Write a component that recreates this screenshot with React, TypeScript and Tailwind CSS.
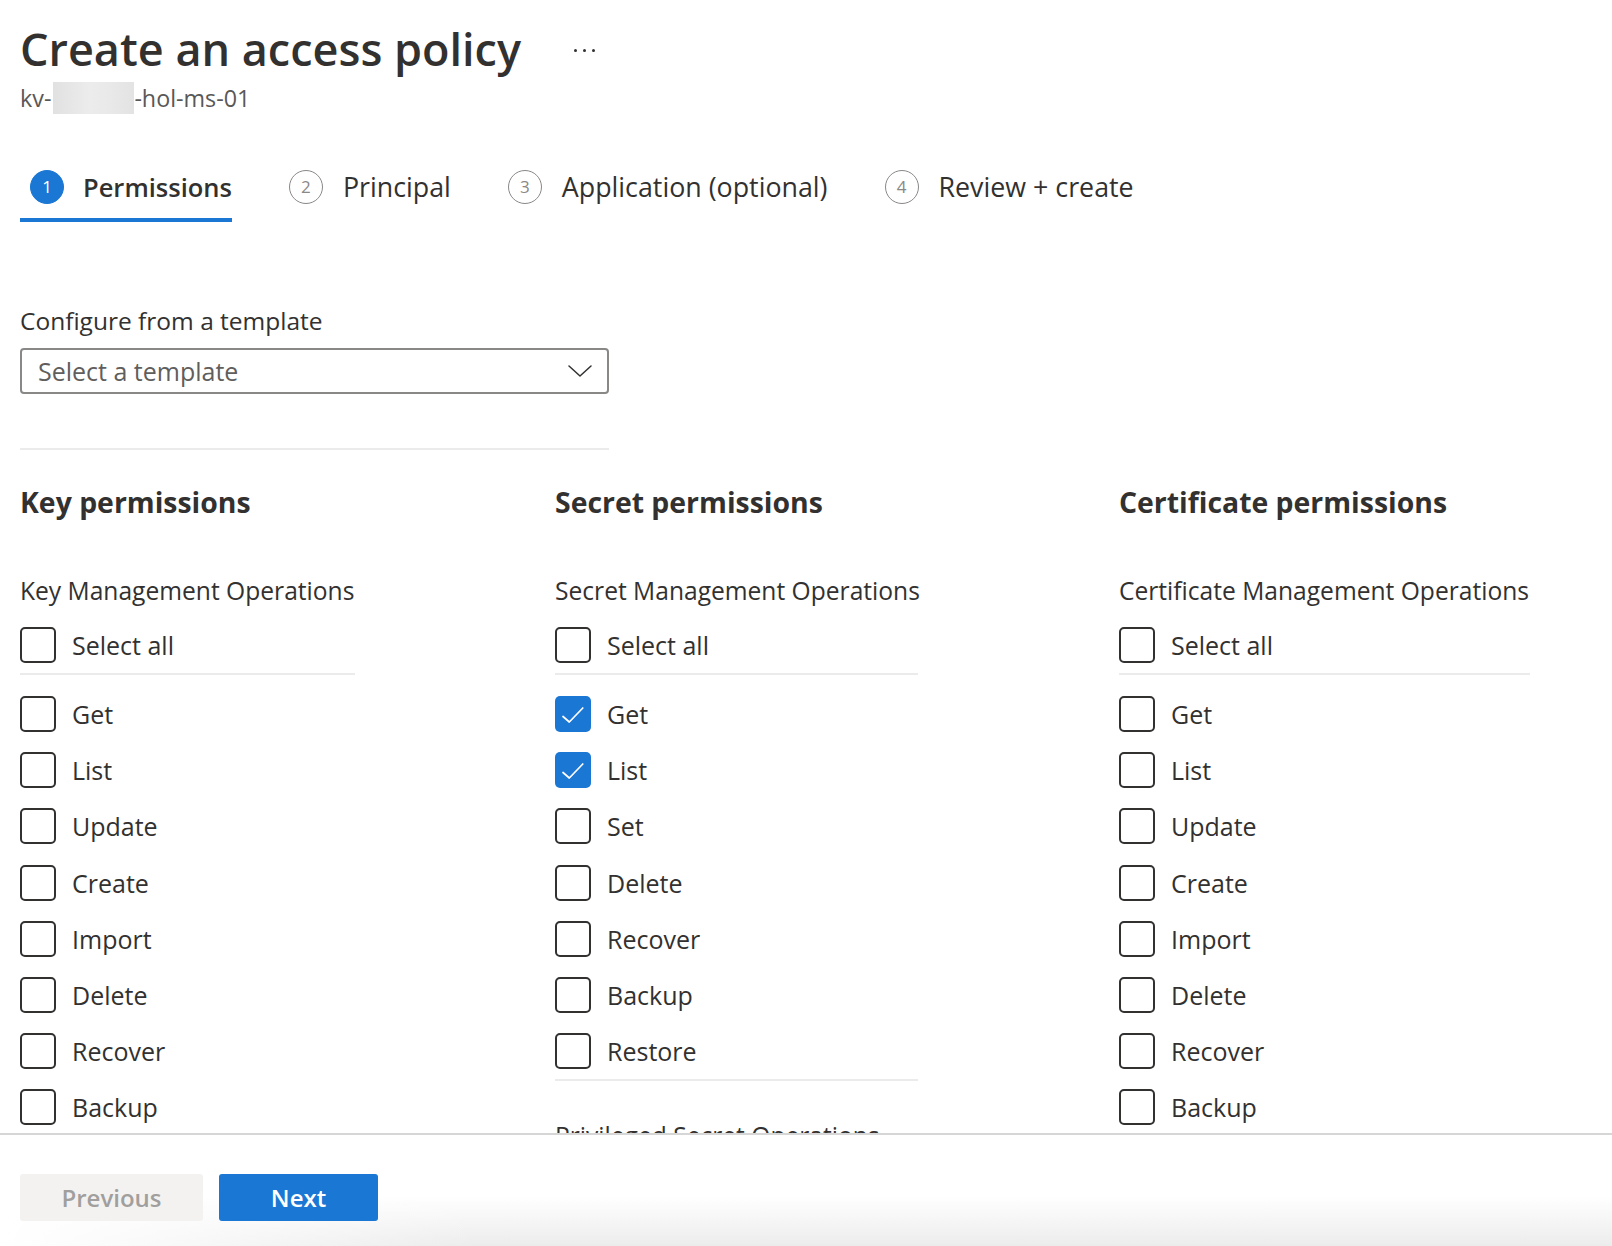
import type { ReactNode } from "react"

type Op = { label: string; checked?: boolean }

const keyOps: Op[] = ["Get", "List", "Update", "Create", "Import", "Delete", "Recover", "Backup"].map((label) => ({ label }))
const secretOps: Op[] = [
  { label: "Get", checked: true },
  { label: "List", checked: true },
  { label: "Set" },
  { label: "Delete" },
  { label: "Recover" },
  { label: "Backup" },
  { label: "Restore" },
]
const certOps: Op[] = ["Get", "List", "Update", "Create", "Import", "Delete", "Recover", "Backup"].map((label) => ({ label }))

function Box({ checked }: { checked?: boolean }) {
  if (checked) {
    return (
      <span className="flex h-[36px] w-[36px] shrink-0 items-center justify-center rounded-[5px] bg-[#1a77d3]">
        <svg width="36" height="36" viewBox="0 0 36 36" fill="none">
          <path d="M8 20.5l6.3 5.5L27.8 12" stroke="#fff" strokeWidth="1.7" strokeLinecap="round" strokeLinejoin="round" />
        </svg>
      </span>
    )
  }
  return <span className="h-[36px] w-[36px] shrink-0 rounded-[5px] border-2 border-[#323130]" />
}

function Row({ op }: { op: Op }) {
  return (
    <div className="flex h-[36px] items-center gap-[16px] text-[25px] leading-[36px] text-[#323130]">
      <Box checked={op.checked} />
      <span>{op.label}</span>
    </div>
  )
}

function Column({
  title,
  group,
  lineWidth,
  ops,
  after,
}: {
  title: string
  group: string
  lineWidth: string
  ops: Op[]
  after?: ReactNode
}) {
  return (
    <div className="flex flex-col">
      <h2 className="h-[40px] text-[28.4px] font-bold leading-[40px] text-[#323130]">{title}</h2>
      <div className="mt-[52px] h-[34px] whitespace-nowrap text-[24.6px] leading-[34px] text-[#323130]">{group}</div>
      <div className="mt-[19px]">
        <Row op={{ label: "Select all" }} />
      </div>
      <div className={`mt-[10px] h-[2px] bg-[#ebebeb] ${lineWidth}`} />
      <div className="mt-[21px] flex flex-col gap-[20.2px]">
        {ops.map((op) => (
          <Row key={op.label} op={op} />
        ))}
      </div>
      {after}
    </div>
  )
}

const steps = [
  { n: 1, label: "Permissions", active: true },
  { n: 2, label: "Principal" },
  { n: 3, label: "Application (optional)" },
  { n: 4, label: "Review + create" },
]

export default function App() {
  return (
    <div className="flex h-screen flex-col overflow-hidden bg-white font-['Open_Sans',sans-serif] text-[#323130]">
      <main className="flex-1 overflow-hidden pl-5 pt-[19px]">
        <div className="flex h-[60px] items-center gap-[53px]">
          <h1 className="text-[45px] font-semibold leading-[60px] text-[#323130]">Create an access policy</h1>
          <div className="flex items-center gap-[6px] pt-[2px]">
            <span className="h-[3px] w-[3px] rounded-full bg-[#323130]" />
            <span className="h-[3px] w-[3px] rounded-full bg-[#323130]" />
            <span className="h-[3px] w-[3px] rounded-full bg-[#323130]" />
          </div>
        </div>
        <div className="mt-[3px] flex h-[32px] items-center text-[23.3px] text-[#5a5857]">
          <span>kv-</span>
          <span className="ml-[2px] h-[32px] w-[81px] bg-[linear-gradient(90deg,#e1e1e1,#ececec_45%,#e9e9e9_70%,#e3e3e3)]" />
          <span>-hol-ms-01</span>
        </div>

        <nav className="mt-[42px] flex gap-[47px]">
          {steps.map((s) => (
            <div
              key={s.n}
              className={`flex h-[66px] items-center border-b-4 pl-[10px] ${
                s.active ? "gap-[19px] border-[#1a77d3]" : "gap-[20px] border-transparent"
              }`}
            >
              <span
                className={`flex h-[34px] w-[34px] items-center justify-center rounded-full border-[1.5px] text-[17px] ${
                  s.active ? "border-[#1a77d3] bg-[#1a77d3] text-white" : "border-[#8a8886] text-[#8a8886]"
                }`}
              >
                {s.n}
              </span>
              <span className={`text-[#323130] ${s.active ? "text-[25.5px] font-semibold" : "text-[26.8px]"}`}>{s.label}</span>
            </div>
          ))}
        </nav>

        <div className="mt-[82px] h-[34px] text-[24.5px] leading-[34px] text-[#323130]">Configure from a template</div>
        <div className="mt-[10px] flex h-[46px] w-[589px] items-center justify-between rounded-[4px] border-2 border-[#8a8886] pl-[16px] pr-[15px]">
          <span className="pt-[2px] text-[25px] text-[#605e5c]">Select a template</span>
          <svg width="24" height="12" viewBox="0 0 24 12" fill="none">
            <path d="M1 1l11 10L23 1" stroke="#323130" strokeWidth="1.5" strokeLinecap="round" strokeLinejoin="round" />
          </svg>
        </div>
        <div className="mt-[54px] h-[2px] w-[589px] bg-[#ebebeb]" />

        <div className="mt-[32px] grid grid-cols-[535px_564px_1fr]">
          <Column title="Key permissions" group="Key Management Operations" lineWidth="w-[335px]" ops={keyOps} />
          <Column
            title="Secret permissions"
            group="Secret Management Operations"
            lineWidth="w-[363px]"
            ops={secretOps}
            after={
              <>
                <div className="mt-[10px] h-[2px] w-[363px] bg-[#ebebeb]" />
                <div className="mt-[38px] h-[34px] whitespace-nowrap text-[24.6px] leading-[34px] text-[#323130]">
                  Privileged Secret Operations
                </div>
              </>
            }
          />
          <Column title="Certificate permissions" group="Certificate Management Operations" lineWidth="w-[411px]" ops={certOps} />
        </div>
      </main>

      <footer className="flex h-[113px] shrink-0 gap-[16px] border-t-2 border-[#d6d6d6] bg-[linear-gradient(to_right,#fff,rgba(255,255,255,0)_30%),linear-gradient(to_bottom,#fff_55%,#ececec)] pl-5 pt-[39px]">
        <button className="h-[47px] w-[183px] rounded-[3px] bg-[#f3f2f1] text-[24px] font-semibold text-[#a19f9d]">Previous</button>
        <button className="h-[47px] w-[159px] rounded-[3px] bg-[#1a77d3] text-[24px] font-semibold text-white">Next</button>
      </footer>
    </div>
  )
}
